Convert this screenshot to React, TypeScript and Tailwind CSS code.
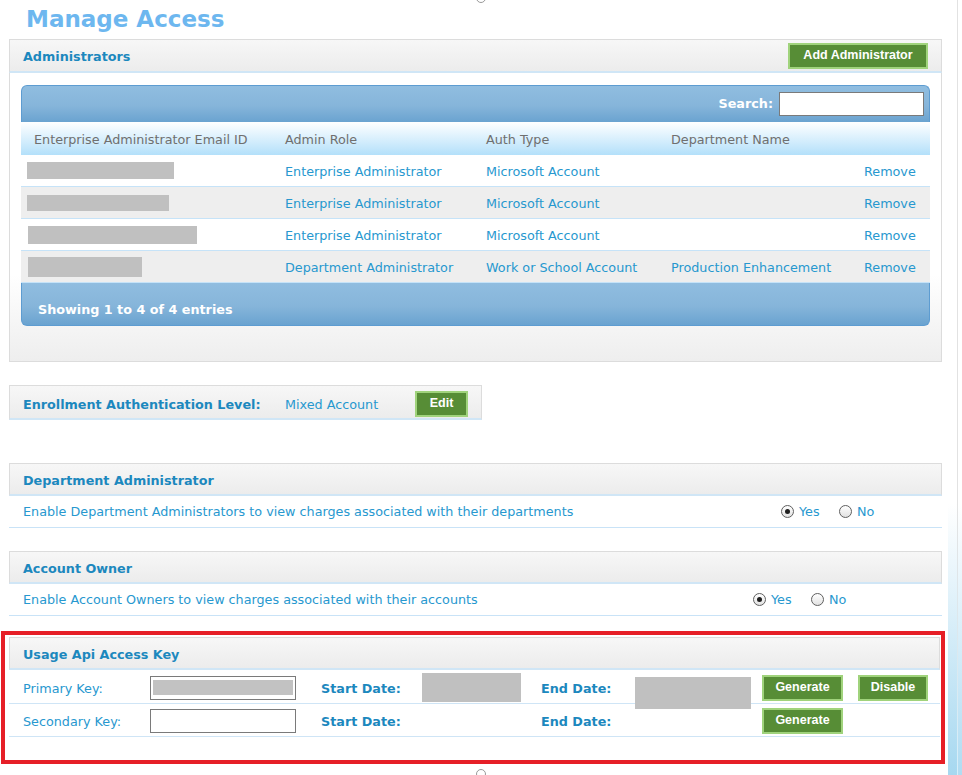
const admins = [
  { role: "Enterprise Administrator", auth: "Microsoft Account", dept: "", mask: "ml-[6px] w-[147px] h-[17px]", alt: false },
  { role: "Enterprise Administrator", auth: "Microsoft Account", dept: "", mask: "ml-[6px] w-[142px] h-[16px]", alt: true },
  { role: "Enterprise Administrator", auth: "Microsoft Account", dept: "", mask: "ml-[7px] w-[169px] h-[18px]", alt: false },
  { role: "Department Administrator", auth: "Work or School Account", dept: "Production Enhancement", mask: "ml-[7px] w-[114px] h-[20px]", alt: true },
];

function GreenButton({ label, className }: { label: string; className: string }) {
  return (
    <button
      className={`flex items-center justify-center border-2 border-[#a0d37c] bg-[#578d36] font-['Liberation_Sans',Arial,sans-serif] text-[12.5px] font-bold text-white ${className}`}
    >
      {label}
    </button>
  );
}

function Radio({ checked }: { checked?: boolean }) {
  return (
    <span className="flex h-[13px] w-[13px] items-center justify-center rounded-full border border-[#5f5f5f] bg-linear-to-b from-white to-[#e2e2e2]">
      {checked && <span className="h-[5px] w-[5px] rounded-full bg-[#1e1e1e]" />}
    </span>
  );
}

function PanelHeader({ title, children }: { title: string; children?: React.ReactNode }) {
  return (
    <div className="flex h-[33px] items-center border border-b-2 border-[#dcdcdc] border-b-[#d0e6f6] bg-linear-to-b from-[#f7f7f7] to-[#ececec] pl-[13px] pt-[4px] text-[12.75px] font-bold text-[#1c88be]">
      <span>{title}</span>
      {children}
    </div>
  );
}

function ToggleSection({ title, text, textWidth }: { title: string; text: string; textWidth: string }) {
  return (
    <div className="ml-[9px] w-[933px]">
      <PanelHeader title={title} />
      <div className="flex h-[32px] items-center border-b border-[#c9e3f7] pl-[14px] text-[12.75px] text-[#2798cf]">
        <span className={textWidth}>{text}</span>
        <span className="flex w-[58px] items-center gap-[5px]">
          <Radio checked />
          <span>Yes</span>
        </span>
        <span className="flex items-center gap-[5px]">
          <Radio />
          <span>No</span>
        </span>
      </div>
    </div>
  );
}

export default function App() {
  return (
    <div className="flex h-[775px] w-[962px] overflow-hidden bg-white font-['DejaVu_Sans',Verdana,sans-serif]">
      <div className="w-[948px]">
        <div className="flex h-0">
          <div className="-mt-[7px] ml-[476px] h-[10px] w-[10px] rounded-full border border-[#9a9a9a]" />
        </div>
        <h1 className="h-[39px] pl-[26px] text-[23px] font-bold leading-[38px] text-[#6db7ef]">
          Manage Access
        </h1>

        {/* administrators */}
        <div className="ml-[9px] w-[933px]">
          <div className="flex h-[34px] items-center justify-between border border-b-2 border-[#dcdcdc] border-b-[#d0e6f6] bg-linear-to-b from-[#f7f7f7] to-[#ececec] pl-[13px] pr-[13px] text-[12.75px] font-bold text-[#1c88be]">
            <span className="pt-[2px]">Administrators</span>
            <GreenButton label="Add Administrator" className="h-[26px] w-[140px]" />
          </div>
          <div className="border border-t-0 border-[#dcdcdc] bg-linear-to-b from-white via-white via-70% to-[#eeeeee] px-[11px] pb-[35px] pt-[12px]">
            <div className="flex h-[37px] items-center justify-end gap-[6px] rounded-t-[6px] border border-b-0 border-[#5d9cd1] bg-linear-to-b from-[#90bde0] via-[#86b5da] via-55% to-[#6aa3d0] pr-[5px] text-[12.75px] font-bold text-white">
              <span>Search:</span>
              <input className="h-[24px] w-[145px] border border-[#7a7a7a] bg-white" />
            </div>
            <div className="grid h-[33px] grid-cols-[264px_201px_185px_193px_1fr] items-center bg-linear-to-b from-white to-[#b3e0fa] pt-[2px] text-[12.75px] text-[#6f6f6f]">
              <span className="pl-[13px]">Enterprise Administrator Email ID</span>
              <span>Admin Role</span>
              <span>Auth Type</span>
              <span>Department Name</span>
              <span />
            </div>
            {admins.map((a, i) => (
              <div
                key={i}
                className={`grid h-[32px] grid-cols-[264px_201px_185px_193px_1fr] items-center border-b border-[#c6e3f8] text-[12.75px] text-[#2798cf] ${a.alt ? "bg-[#eeeeee]" : "bg-white"}`}
              >
                <span className={`block bg-[#c0c0c0] ${a.mask}`} />
                <span className="pt-[2px]">{a.role}</span>
                <span className="pt-[2px]">{a.auth}</span>
                <span className="pt-[2px]">{a.dept}</span>
                <span className="pt-[2px]">Remove</span>
              </div>
            ))}
            <div className="h-[43px] rounded-b-[6px] border border-t-0 border-[#5d9cd1] bg-linear-to-b from-[#90bde0] via-[#86b5da] via-55% to-[#6aa3d0] pl-[16px] pt-[19px] text-[12.75px] font-bold leading-[15px] text-white">
              Showing 1 to 4 of 4 entries
            </div>
          </div>
        </div>

        {/* enrollment level */}
        <div className="ml-[9px] mt-[23px] flex h-[35px] w-[473px] items-center border border-b-2 border-[#dcdcdc] border-b-[#d0e6f6] bg-linear-to-b from-[#f7f7f7] to-[#ececec] pl-[13px] pt-[3px] text-[12.75px] text-[#2798cf]">
          <span className="w-[262px] pt-[2px] font-bold text-[#1c88be]">Enrollment Authentication Level:</span>
          <span className="w-[130px] pt-[2px]">Mixed Account</span>
          <GreenButton label="Edit" className="h-[26px] w-[53px]" />
        </div>

        <div className="mt-[43px]">
          <ToggleSection
            title="Department Administrator"
            text="Enable Department Administrators to view charges associated with their departments"
            textWidth="w-[758px]"
          />
        </div>
        <div className="mt-[23px]">
          <ToggleSection
            title="Account Owner"
            text="Enable Account Owners to view charges associated with their accounts"
            textWidth="w-[730px]"
          />
        </div>

        {/* usage api key, highlighted */}
        <div className="ml-[1px] mt-[15px] h-[133px] w-[944px] border-4 border-[#e61f27] pl-[4px] pr-[1px] pt-[2px]">
          <PanelHeader title="Usage Api Access Key" />
          <div className="flex h-[34px] items-center border-b border-[#cfe5f6] pt-[2px] text-[12.75px] text-[#2798cf]">
            <span className="w-[141px] pl-[14px] pt-[2px]">Primary Key:</span>
            <div className="flex h-[24px] w-[146px] items-center border border-[#7a7a7a] px-[2px]">
              <span className="h-[15px] w-full bg-[#c2c2c2]" />
            </div>
            <span className="w-[25px]" />
            <span className="w-[101px] pt-[2px] font-bold text-[#1c88be]">Start Date:</span>
            <span className="h-[29px] w-[99px] bg-[#c0c0c0]" />
            <span className="w-[20px]" />
            <span className="w-[94px] pt-[2px] font-bold text-[#1c88be]">End Date:</span>
            <span className="mt-[5px] h-[32px] w-[116px] self-start bg-[#c0c0c0]" />
            <span className="w-[11px]" />
            <GreenButton label="Generate" className="h-[26px] w-[81px]" />
            <span className="w-[15px]" />
            <GreenButton label="Disable" className="h-[26px] w-[70px]" />
          </div>
          <div className="flex h-[33px] items-center border-b border-[#cfe5f6] pt-[1px] text-[12.75px] text-[#2798cf]">
            <span className="w-[141px] pl-[14px] pt-[2px]">Secondary Key:</span>
            <input className="h-[24px] w-[146px] border border-[#7a7a7a] bg-white" />
            <span className="w-[25px]" />
            <span className="w-[101px] pt-[2px] font-bold text-[#1c88be]">Start Date:</span>
            <span className="w-[99px]" />
            <span className="w-[20px]" />
            <span className="w-[94px] pt-[2px] font-bold text-[#1c88be]">End Date:</span>
            <span className="w-[116px]" />
            <span className="w-[11px]" />
            <GreenButton label="Generate" className="h-[26px] w-[81px]" />
          </div>
        </div>
        <div className="ml-[476px] mt-[5px] h-[10px] w-[10px] rounded-full border border-[#9a9a9a]" />
      </div>

      {/* right edge strip */}
      <div className="flex w-[14px]">
        <div className="w-[9px] bg-linear-to-b from-white via-white via-65% to-[#a6d8f0]" />
        <div className="w-[1px] bg-linear-to-b from-[#e2e2e2] via-[#e2e2e2] via-65% to-[#d6eef9]" />
        <div className="w-[4px] bg-linear-to-b from-white via-white via-65% to-[#b0dcf2]" />
      </div>
    </div>
  );
}
